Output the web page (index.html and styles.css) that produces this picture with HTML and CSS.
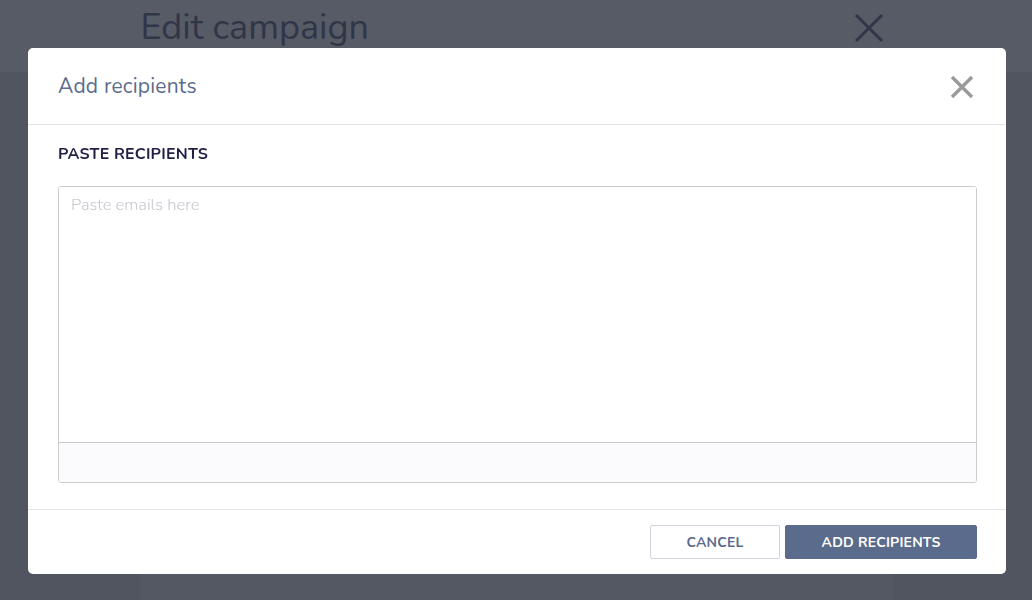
FILE: index.html
```html
<!DOCTYPE html>
<html lang="en">
<head>
<meta charset="utf-8">
<title>Add recipients</title>
<link rel="stylesheet" href="styles.css">
</head>
<body>
<div class="page">
  <header class="page-header">
    <div class="container header-inner">
      <h1 class="page-title">Edit campaign</h1>
      <svg class="page-close" viewBox="0 0 30 30" width="30" height="30"><path d="M2 2 L28 28 M28 2 L2 28" stroke="#2f3648" stroke-width="3" fill="none"/></svg>
    </div>
  </header>
  <main class="container page-main"></main>
</div>

<div class="overlay">
  <div class="modal">
    <div class="modal-header">
      <h2 class="modal-title">Add recipients</h2>
      <svg class="modal-close" viewBox="0 0 24 24" width="24" height="24"><path d="M2 2 L22 22 M22 2 L2 22" stroke="#9a9a9a" stroke-width="3.4" fill="none"/></svg>
    </div>
    <div class="modal-body">
      <div class="label">PASTE RECIPIENTS</div>
      <div class="field">
        <textarea class="emails" placeholder="Paste emails here"></textarea>
        <div class="field-foot"></div>
      </div>
    </div>
    <div class="modal-footer">
      <button class="btn btn-cancel">CANCEL</button>
      <button class="btn btn-primary">ADD RECIPIENTS</button>
    </div>
  </div>
</div>
</body>
</html>
```
FILE: styles.css
```css
* { box-sizing: border-box; }
html, body { margin: 0; padding: 0; height: 100%; }
body {
  background: #50555f;
  font-family: "Nunito", "Lato", "Noto Sans", sans-serif;
  overflow: hidden;
}
.page { height: 100%; display: flex; flex-direction: column; }
.page-header { height: 72px; background: #575b65; flex: none; }
.container { width: 753px; margin: 0 auto; }
.header-inner {
  height: 100%;
  display: flex;
  align-items: center;
  justify-content: space-between;
  padding-right: 9px;
}
.page-title {
  margin: 0;
  font-weight: 400;
  font-size: 36px;
  color: #2f3648;
  line-height: 1;
  margin-top: -16px;
  margin-left: 1px;
}
.page-close { margin-top: -16px; }
.page-main { flex: 1; background: #545862; }

.overlay {
  position: fixed;
  inset: 0;
  padding: 48px 26px 26px 28px;
}
.modal {
  background: #fff;
  border-radius: 5px;
  height: 526px;
  display: flex;
  flex-direction: column;
}
.modal-header {
  height: 77px;
  flex: none;
  border-bottom: 1px solid #e4e4e6;
  display: flex;
  align-items: center;
  justify-content: space-between;
  padding: 0 32px 0 30px;
}
.modal-title {
  margin: 0;
  font-weight: 400;
  font-size: 21px;
  color: #5b6b8c;
  letter-spacing: 0.2px;
}
.modal-close { margin-top: 2px; }
.modal-body {
  flex: 1;
  padding: 19px 29px 26px 30px;
  display: flex;
  flex-direction: column;
}
.label {
  font-weight: 700;
  font-size: 16px;
  line-height: 20px;
  color: #211f45;
  letter-spacing: 0.2px;
}
.field {
  margin-top: 22px;
  flex: 1;
  border: 1px solid #cdcdd0;
  border-radius: 3px;
  display: flex;
  flex-direction: column;
  overflow: hidden;
}
.emails {
  flex: 1;
  border: 0;
  resize: none;
  outline: none;
  padding: 6px 12px;
  font-family: inherit;
  font-size: 16.5px;
  color: #333;
  background: #fff;
}
.emails::placeholder { color: #c6c8cf; font-weight: 300; }
.field-foot {
  height: 40px;
  flex: none;
  background: #fbfbfd;
  border-top: 1px solid #cdcdd0;
}
.modal-footer {
  height: 65px;
  flex: none;
  border-top: 1px solid #e4e4e6;
  display: flex;
  justify-content: flex-end;
  align-items: flex-start;
  padding: 15px 29px 0 0;
  gap: 5px;
}
.btn {
  height: 34px;
  border-radius: 2px;
  font-family: inherit;
  font-size: 14px;
  font-weight: 700;
  letter-spacing: 0.2px;
  cursor: pointer;
}
.btn-cancel {
  width: 130px;
  background: #fff;
  border: 1px solid #d0d4de;
  color: #5b6b8c;
}
.btn-primary {
  width: 192px;
  background: #5b6b8c;
  border: 1px solid #5b6b8c;
  color: #fff;
}
```
